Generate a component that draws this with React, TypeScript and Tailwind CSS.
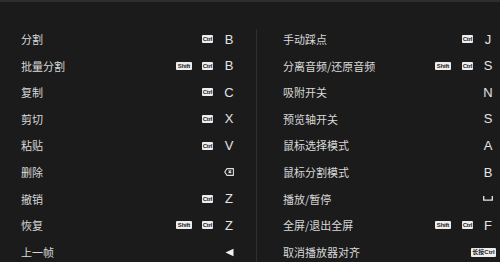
type Row = { label: string; shift?: boolean; ctrl?: boolean; key?: string; icon?: "del" | "prev" | "space"; hold?: boolean };

const left: Row[] = [
  { label: "分割", ctrl: true, key: "B" },
  { label: "批量分割", shift: true, ctrl: true, key: "B" },
  { label: "复制", ctrl: true, key: "C" },
  { label: "剪切", ctrl: true, key: "X" },
  { label: "粘贴", ctrl: true, key: "V" },
  { label: "删除", icon: "del" },
  { label: "撤销", ctrl: true, key: "Z" },
  { label: "恢复", shift: true, ctrl: true, key: "Z" },
  { label: "上一帧", icon: "prev" },
];

const right: Row[] = [
  { label: "手动踩点", ctrl: true, key: "J" },
  { label: "分离音频/还原音频", shift: true, ctrl: true, key: "S" },
  { label: "吸附开关", key: "N" },
  { label: "预览轴开关", key: "S" },
  { label: "鼠标选择模式", key: "A" },
  { label: "鼠标分割模式", key: "B" },
  { label: "播放/暂停", icon: "space" },
  { label: "全屏/退出全屏", shift: true, ctrl: true, key: "F" },
  { label: "取消播放器对齐", hold: true },
];

function Badge({ text, w }: { text: string; w: string }) {
  return (
    <span
      className={`flex h-[8px] ${w} items-center justify-center rounded-[1px] bg-[#eeeeee] text-[6px] font-bold leading-none tracking-[-0.2px] text-[#222]`}
      style={{ fontFamily: '"Liberation Sans", Arial, sans-serif' }}
    >
      {text}
    </span>
  );
}

function KeyIcon({ icon }: { icon: Row["icon"] }) {
  if (icon === "del")
    return (
      <svg width="10" height="8" viewBox="0 0 10 8" fill="none" stroke="#e0e0e0" strokeWidth="1.1">
        <path d="M3 0.6H9.4V7.4H3L0.7 4Z" strokeLinejoin="round" />
        <path d="M4.6 2.4L7.2 5M7.2 2.4L4.6 5" />
      </svg>
    );
  if (icon === "prev")
    return (
      <svg width="9" height="9" viewBox="0 0 9 9">
        <path d="M8.5 0.8V8.2L0.5 4.5Z" fill="#f0f0f0" />
      </svg>
    );
  return (
    <svg width="10" height="5" viewBox="0 0 10 5" fill="none" stroke="#e6e6e6" strokeWidth="1.3">
      <path d="M0.7 0V4.2H9.3V0" />
    </svg>
  );
}

function ShortcutRow({ row, side }: { row: Row; side: "l" | "r" }) {
  return (
    <div className="flex h-[26.6px] items-center">
      <span className="flex-1 text-[11px] text-[#d8d8d8]">{row.label}</span>
      {row.hold ? (
        <span
          className="flex h-[9px] w-[25px] items-center justify-center rounded-[1px] bg-[#eeeeee] text-[6px] font-bold leading-none text-[#222]"
          style={{ fontFamily: '"Liberation Sans", "Noto Sans CJK SC", sans-serif' }}
        >
          长按Ctrl
        </span>
      ) : (
        <>
          <div className={`flex items-center ${side === "l" ? "gap-[10px]" : "gap-[11px]"}`}>
            {row.shift && <Badge text="Shift" w="w-[16px]" />}
            {row.ctrl && <Badge text="Ctrl" w="w-[11px]" />}
          </div>
          <span
            className={`flex w-[16px] items-center justify-center text-[13px] text-[#e4e4e4] ${side === "l" ? "ml-[8px]" : "ml-[7px]"}`}
            style={{ fontFamily: '"Liberation Sans", Arial, sans-serif' }}
          >
            {row.icon ? <KeyIcon icon={row.icon} /> : row.key}
          </span>
        </>
      )}
    </div>
  );
}

export default function App() {
  return (
    <div
      className="h-[262px] w-[500px] overflow-hidden border-t-2 border-[#2e2e2e] bg-[#1b1b1b]"
      style={{ fontFamily: '"Noto Sans CJK SC", "Noto Sans", sans-serif' }}
    >
      <div className="grid grid-cols-[256px_244px]">
        <div className="pl-[21px] pr-[19px] pt-[24px]">
          {left.map((r) => (
            <ShortcutRow key={r.label} row={r} side="l" />
          ))}
        </div>
        <div className="mt-[27px] border-l border-[#2f2f2f] pl-[26px] pr-[4px]">
          <div className="-mt-[3px]">
            {right.map((r) => (
              <ShortcutRow key={r.label} row={r} side="r" />
            ))}
          </div>
        </div>
      </div>
    </div>
  );
}
